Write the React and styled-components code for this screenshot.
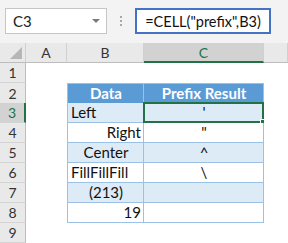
import React from 'react';
import styled, { createGlobalStyle } from 'styled-components';

const GREEN = '#217346';
const GRID = '#9bc2e6';

const Global = createGlobalStyle`
  body {
    margin: 0;
    background: #ffffff;
    font-family: 'Lato', 'Liberation Sans', sans-serif;
  }
`;

const Sheet = styled.div`
  width: 288px;
  height: 243px;
  overflow: hidden;
  background: #ffffff;
`;

const Toolbar = styled.div`
  height: 43px;
  box-sizing: border-box;
  padding: 8px 0 9px 5px;
  display: flex;
  align-items: stretch;
  background: #f3f3f3;
`;

const NameBox = styled.div`
  width: 102px;
  box-sizing: border-box;
  border: 1px solid #c6c6c6;
  background: #ffffff;
  display: flex;
  align-items: center;
  justify-content: space-between;
  padding: 0 6px 0 7px;
  font-size: 15px;
  color: #222;
`;

const Arrow = styled.span`
  width: 0;
  height: 0;
  border-left: 4px solid transparent;
  border-right: 4px solid transparent;
  border-top: 4px solid #7a7a7a;
`;

const Dots = styled.div`
  width: 28px;
  display: flex;
  flex-direction: column;
  align-items: center;
  justify-content: center;
  gap: 2px;
  span {
    width: 2px;
    height: 2px;
    background: #a8a8a8;
  }
`;

const FormulaBox = styled.div`
  width: 136px;
  box-sizing: border-box;
  border: 2px solid #4472c4;
  background: #ffffff;
  display: flex;
  align-items: center;
  justify-content: center;
  font-size: 14.5px;
  color: #111;
`;

const Row = styled.div`
  display: grid;
  grid-template-columns: 26px 41px 77px 120px 1fr;
  height: 20px;
`;

const ColHead = styled.div`
  box-sizing: border-box;
  display: flex;
  align-items: center;
  justify-content: center;
  font-size: 14px;
  color: ${(p) => (p.active ? GREEN : '#333')};
  background: ${(p) => (p.active ? '#d2d2d2' : '#e9e9e9')};
  border-right: 1px solid #d0d0d0;
  border-bottom: ${(p) => (p.active ? `2px solid ${GREEN}` : '1px solid #bdbdbd')};
`;

const Corner = styled(ColHead)`
  position: relative;
  &::after {
    content: '';
    position: absolute;
    right: 3px;
    bottom: 3px;
    border-left: 12px solid transparent;
    border-bottom: 12px solid #b6b6b6;
  }
`;

const RowHead = styled.div`
  box-sizing: border-box;
  display: flex;
  align-items: center;
  justify-content: center;
  font-size: 14px;
  color: ${(p) => (p.active ? GREEN : '#333')};
  background: ${(p) => (p.active ? '#d2d2d2' : '#e9e9e9')};
  border-bottom: 1px solid #d4d4d4;
  border-right: ${(p) => (p.active ? `2px solid ${GREEN}` : '1px solid #bdbdbd')};
`;

const Cell = styled.div`
  position: relative;
  box-sizing: border-box;
  display: flex;
  align-items: center;
  justify-content: ${(p) => p.align || 'flex-start'};
  padding: 0 2px 1px 3px;
  font-size: 15px;
  white-space: nowrap;
  color: ${(p) => (p.head ? '#ffffff' : '#111')};
  font-weight: ${(p) => (p.head ? 700 : 400)};
  background: ${(p) => (p.head ? '#5b9bd5' : p.band ? '#ddebf7' : '#ffffff')};
  border-right: ${(p) => (p.table ? `1px solid ${GRID}` : 'none')};
  border-bottom: ${(p) => (p.table ? `1px solid ${GRID}` : 'none')};
  border-left: ${(p) => (p.first ? `1px solid ${GRID}` : 'none')};
  border-top: ${(p) => (p.top ? `1px solid ${GRID}` : 'none')};
`;

const Selection = styled.div`
  position: absolute;
  left: -1px;
  top: -1px;
  right: -1px;
  bottom: -1px;
  border: 2px solid ${GREEN};
  pointer-events: none;
  &::after {
    content: '';
    position: absolute;
    right: -5px;
    bottom: -5px;
    width: 5px;
    height: 5px;
    background: ${GREEN};
    border: 1px solid #ffffff;
  }
`;

const data = [
  { b: 'Left', bAlign: 'flex-start', c: "'" },
  { b: 'Right', bAlign: 'flex-end', c: '"' },
  { b: 'Center', bAlign: 'center', c: '^' },
  { b: 'FillFillFill', bAlign: 'flex-start', c: '\\' },
  { b: '(213)', bAlign: 'center', c: '' },
  { b: '19', bAlign: 'flex-end', c: '' },
];

const App = () => (
  <>
    <Global />
    <Sheet>
      <Toolbar>
        <NameBox>
          C3
          <Arrow />
        </NameBox>
        <Dots>
          <span />
          <span />
          <span />
        </Dots>
        <FormulaBox>=CELL("prefix",B3)</FormulaBox>
      </Toolbar>

      <Row>
        <Corner />
        <ColHead>A</ColHead>
        <ColHead>B</ColHead>
        <ColHead active>C</ColHead>
        <ColHead />
      </Row>

      <Row>
        <RowHead>1</RowHead>
        <Cell />
        <Cell />
        <Cell />
        <Cell />
      </Row>

      <Row>
        <RowHead>2</RowHead>
        <Cell />
        <Cell table head first top align="center">Data</Cell>
        <Cell table head top align="center">Prefix Result</Cell>
        <Cell />
      </Row>

      {data.map((r, i) => (
        <Row key={i}>
          <RowHead active={i === 0}>{i + 3}</RowHead>
          <Cell />
          <Cell table first band={i % 2 === 0} align={r.bAlign}>
            {r.b}
          </Cell>
          <Cell table band={i % 2 === 0} align="center">
            {r.c}
            {i === 0 && <Selection />}
          </Cell>
          <Cell />
        </Row>
      ))}

      <Row>
        <RowHead>9</RowHead>
        <Cell />
        <Cell />
        <Cell />
        <Cell />
      </Row>
    </Sheet>
  </>
);

export default App;
